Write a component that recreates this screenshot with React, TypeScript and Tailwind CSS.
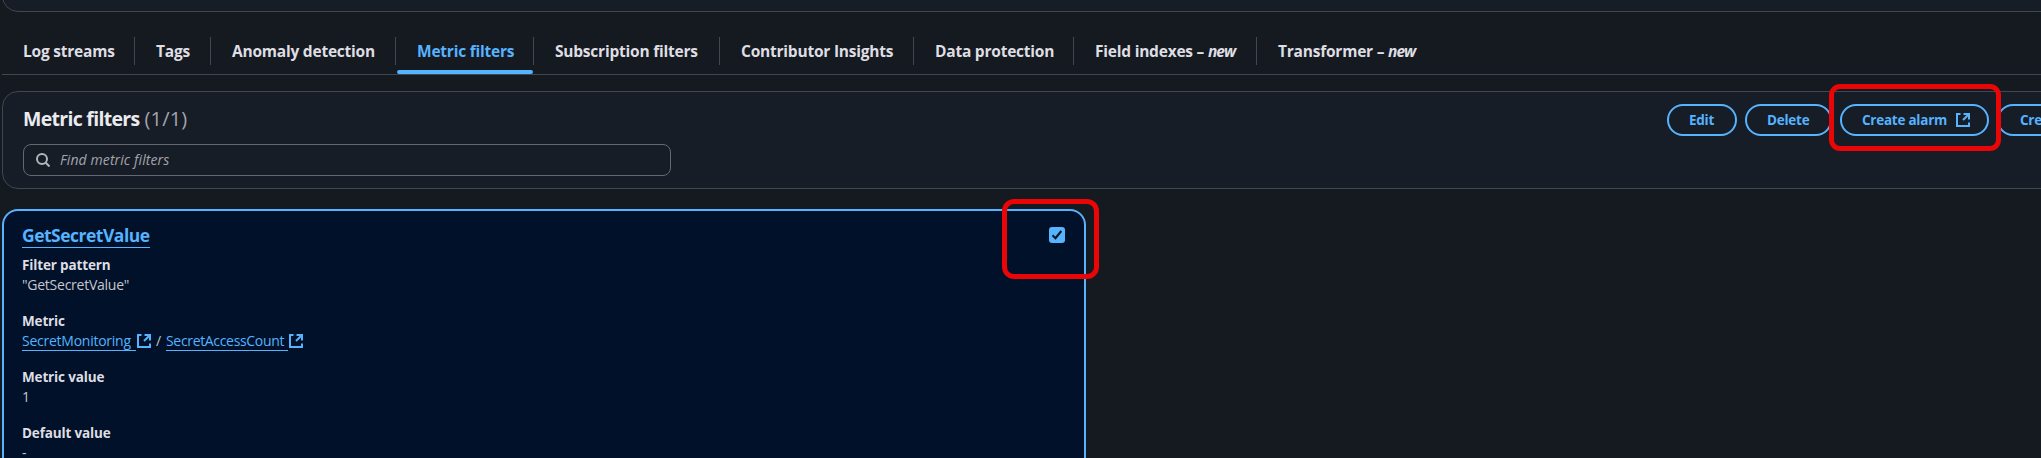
import type { ReactNode } from "react";

type Tab = { label: string; isNew?: boolean; width: string; active?: boolean; last?: boolean };

const tabs: Tab[] = [
  { label: "Log streams", width: "w-[133px]" },
  { label: "Tags", width: "w-[76px]" },
  { label: "Anomaly detection", width: "w-[185px]" },
  { label: "Metric filters", width: "w-[138px]", active: true },
  { label: "Subscription filters", width: "w-[186px]" },
  { label: "Contributor Insights", width: "w-[194px]" },
  { label: "Data protection", width: "w-[160px]" },
  { label: "Field indexes", isNew: true, width: "w-[183px]" },
  { label: "Transformer", isNew: true, width: "w-[180px]", last: true },
];

function ExternalIcon({ className = "" }: { className?: string }) {
  return (
    <svg viewBox="0 0 14 14" className={`size-3.5 shrink-0 ${className}`} fill="none" stroke="currentColor" strokeWidth="2">
      <path d="M4.5 1H1v12h12V9.5" />
      <path d="M7.5 1H13v5.5" />
      <path d="M12.8 1.2 7 7" />
    </svg>
  );
}

function TabItem({ tab }: { tab: Tab }) {
  return (
    <div className={`relative flex h-[37px] shrink-0 items-start pl-[21px] ${tab.width}`}>
      <span
        className={`mt-1 text-[15.5px] leading-5 font-bold tracking-[-0.22px] whitespace-pre ${
          tab.active ? "text-[#55b3ff]" : "text-[#dedee3]"
        }`}
      >
        {tab.label}
        {tab.isNew && (
          <>
            {" – "}
            <i className="tracking-[-1px]">new</i>
          </>
        )}
      </span>
      {!tab.last && <span className="absolute top-0 right-0 h-7 w-px bg-[#424650]" />}
      {tab.active && <span className="absolute right-px bottom-0 left-px h-1 rounded-[2px] bg-[#55b3ff]" />}
    </div>
  );
}

function Button({ children, className }: { children: ReactNode; className: string }) {
  return (
    <button
      className={`flex h-8 shrink-0 items-center rounded-full border-2 border-[#55b3ff] pl-5 text-[13.5px] leading-5 font-bold tracking-[-0.25px] whitespace-nowrap text-[#55b3ff] ${className}`}
    >
      {children}
    </button>
  );
}

function Field({ label, children }: { label: string; children: ReactNode }) {
  return (
    <div className="mb-4">
      <div className="h-5 text-[13.5px] leading-5 font-bold tracking-[-0.15px] text-[#dedee3]">{label}</div>
      <div className="flex h-5 items-center text-[14px] leading-5 tracking-[-0.25px] text-[#c6c6cd]">{children}</div>
    </div>
  );
}

export default function App() {
  return (
    <div className="relative h-[458px] w-full overflow-hidden bg-[#151920] pl-0.5 font-['Open_Sans','Noto_Sans',sans-serif]">
      <div className="w-[2200px]">
        <div className="h-3 overflow-hidden">
          <div className="-mt-8 h-11 rounded-2xl border border-[#424650] bg-[#161d26]" />
        </div>

        <nav className="flex h-[63px] items-end border-b border-[#424650]">
          {tabs.map((tab) => (
            <TabItem key={tab.label} tab={tab} />
          ))}
        </nav>

        <section className="mt-4 h-[98px] rounded-2xl border border-[#424650] bg-[#161d26] px-5">
          <div className="flex h-[52px] items-start pt-3">
            <h2 className="mt-[3px] flex w-[1644px] gap-[5px] text-[19.5px] leading-6 font-bold tracking-[-0.7px] text-[#ebebf0]">
              Metric filters
              <span className="text-[20px] font-normal tracking-[0.2px] text-[#a4a4ad]">(1/1)</span>
            </h2>
            <div className="flex gap-2">
              <Button className="w-[70px]">Edit</Button>
              <Button className="w-[87px]">Delete</Button>
              <Button className="w-[149px] gap-[9px]">
                Create alarm
                <ExternalIcon />
              </Button>
              <Button className="w-[180px] pl-[21px]">Create metric filter</Button>
            </div>
          </div>
          <div className="flex h-8 w-[648px] items-center rounded-lg border border-[#656871] bg-[#161d26] pl-3">
            <svg viewBox="0 0 14 14" className="size-3.5 text-[#b4b4bb]" fill="none" stroke="currentColor" strokeWidth="2">
              <circle cx="6" cy="6" r="5" />
              <path d="m9.5 9.5 4 4" />
            </svg>
            <span className="ml-2.5 text-[14px] leading-5 tracking-[0.1px] text-[#a4a4ad] italic">Find metric filters</span>
          </div>
        </section>

        <article className="mt-5 h-80 w-[1084px] rounded-2xl border-2 border-[#55b3ff] bg-[#001129] px-[18px] pt-4">
          <header className="flex h-[27px] items-start justify-between">
            <a className="-mt-0.5 h-[23px] border-b border-[#55b3ff] text-[17.5px] leading-5 font-bold tracking-[-0.5px] text-[#55b3ff]">
              GetSecretValue
            </a>
            <span className="mr-px flex size-4 items-center justify-center rounded-[3px] bg-[#55b3ff]">
              <svg viewBox="0 0 16 16" className="size-4" fill="none" stroke="#0f141a" strokeWidth="2">
                <path d="m3.5 8.2 3 3 5.8-7.2" />
              </svg>
            </span>
          </header>
          <div className="mt-px">
            <Field label="Filter pattern">"GetSecretValue"</Field>
            <Field label="Metric">
              <a className="h-5 w-[114px] shrink-0 border-b border-[#55b3ff] text-[#55b3ff]">SecretMonitoring</a>
              <ExternalIcon className="ml-px text-[#55b3ff]" />
              <span className="mx-[5px] w-[5px]">/</span>
              <a className="h-5 w-[122px] shrink-0 border-b border-[#55b3ff] tracking-[-0.33px] text-[#55b3ff]">SecretAccessCount</a>
              <ExternalIcon className="ml-px text-[#55b3ff]" />
            </Field>
            <Field label="Metric value">1</Field>
            <Field label="Default value">-</Field>
          </div>
        </article>
      </div>

      <div className="absolute top-[84px] left-[1829px] h-[67px] w-[172px] rounded-[11px] border-[5px] border-[#ea0606]" />
      <div className="absolute top-[199px] left-[1002px] h-20 w-[97px] rounded-[12px] border-[5px] border-[#ea0606]" />
    </div>
  );
}
